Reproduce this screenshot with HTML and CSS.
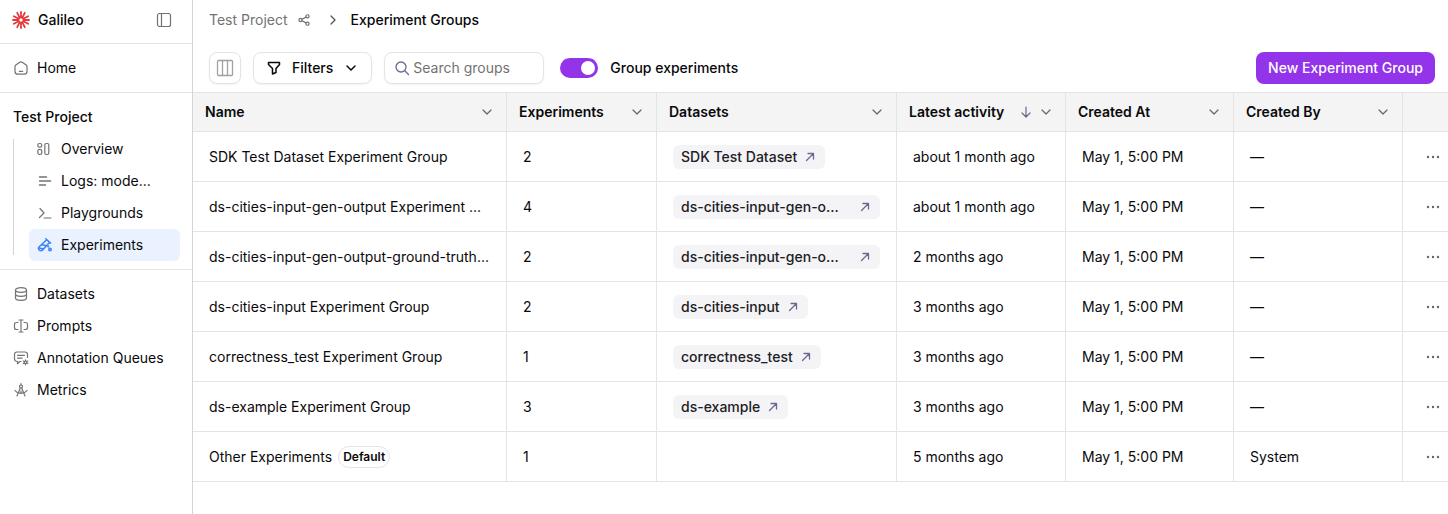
FILE: index.html
```html
<!DOCTYPE html>
<html lang="en">
<head>
  <meta charset="UTF-8">
  <title>Experiment Groups</title>
  <link rel="stylesheet" href="styles.css">
</head>
<body>
  <!-- Shared icons -->
  <svg class="sprite" aria-hidden="true">
    <symbol id="chevron" viewBox="0 0 16 16"><path d="M4 6l4 4 4-4"/></symbol>
    <symbol id="arrow-out" viewBox="0 0 16 16"><path d="M4.500 11.500L11 5M6 4.500h5.500v5.500"/></symbol>
    <symbol id="dots" viewBox="0 0 16 16"><circle cx="3" cy="8" r="1.200"/><circle cx="8" cy="8" r="1.200"/><circle cx="13" cy="8" r="1.200"/></symbol>
  </svg>

  <div class="app">
    <aside class="sidebar">
      <div class="brand">
        <svg class="logo" viewBox="0 0 18 18">
          <path d="M9 6.500V1M9 11.500V17M6.500 9H1M11.500 9H17M7.800 6.800L5.200 1.800M10.200 6.800l2.600-5M7.800 11.200l-2.600 5M10.200 11.200l2.600 5M6.800 7.800L1.800 5.200M11.200 7.800l5-2.600M6.800 10.200l-5 2.600M11.200 10.200l5 2.600"/>
        </svg>
        <span class="brand-name">Galileo</span>
        <button class="collapse" aria-label="Collapse sidebar">
          <svg class="icon" viewBox="0 0 16 16"><rect x="1.500" y="1.500" width="13" height="13" rx="2"/><path d="M5.500 1.500v13"/></svg>
        </button>
      </div>

      <nav class="nav-section">
        <a class="nav-link" href="#">
          <svg class="icon" viewBox="0 0 16 16"><path d="M2.800 5L6.400 2.400q1.600-1 3.200 0L13.200 5q.8.700.8 1.800v4.700q0 2.700-2.700 2.700H4.700Q2 14.200 2 11.500V6.800Q2 5.700 2.800 5zM6.300 11.300h3.400"/></svg>
          Home
        </a>
      </nav>

      <nav class="nav-section">
        <div class="nav-title">Test Project</div>
        <div class="nav-tree">
          <a class="nav-link" href="#">
            <svg class="icon" viewBox="0 0 16 16"><rect x="0.800" y="2.500" width="4" height="3.600" rx="1.700"/><rect x="0.800" y="8.300" width="4" height="5.200" rx="1.900"/><rect x="7.800" y="2.500" width="4" height="11" rx="1.500"/></svg>
            Overview
          </a>
          <a class="nav-link" href="#">
            <svg class="icon icon-thick" viewBox="0 0 16 16"><path d="M2.500 4h7M2.500 8h11M2.500 12h6"/></svg>
            Logs: mode...
          </a>
          <a class="nav-link" href="#">
            <svg class="icon" viewBox="0 0 16 16"><path d="M3 3.500L7 8l-4.500 4.500M7 13h7"/></svg>
            Playgrounds
          </a>
          <a class="nav-link active" href="#">
            <svg class="icon icon-thick" viewBox="0 0 16 16"><path d="M8.800 1.800l4.700 4.300M9.700 2.800L2.200 9.800q-1.500 1.700 0 3.200t3.200.2L12.500 5.500M5 7.800l4.300 1M2.500 11l3 .8"/><circle cx="13" cy="12.500" r="1.200"/><circle cx="11.300" cy="9.500" r=".4"/></svg>
            Experiments
          </a>
        </div>
      </nav>

      <nav class="nav-section last">
        <a class="nav-link" href="#">
          <svg class="icon" viewBox="0 0 16 16"><ellipse cx="8" cy="4" rx="5.500" ry="2.300"/><path d="M2.500 4v8q0 2.300 5.500 2.300t5.500-2.300V4M2.500 8q0 2.300 5.500 2.300T13.500 8"/></svg>
          Datasets
        </a>
        <a class="nav-link" href="#">
          <svg class="icon" viewBox="0 0 16 16"><path d="M8 2.500v11M6 2h4M6 14h4M5 4.500H3.500q-2 0-2 2v3q0 2 2 2H5M11 4.500h1.500q2 0 2 2v3q0 2-2 2H11"/></svg>
          Prompts
        </a>
        <a class="nav-link" href="#">
          <svg class="icon" viewBox="0 0 16 16"><path d="M8 11.500H6.800L4.500 13.800v-2.300q-3 0-3-2.500V4.500q0-2.500 2.500-2.500h8q2.500 0 2.500 2.500V7.500M4.500 5.300h7M4.500 8.200h4.500"/><circle cx="12.500" cy="12.300" r="1.300"/><path d="M12.500 9.800V11M12.500 13.600v1.200M10.300 11l1 .6M13.700 13l1 .6M14.700 11l-1 .6M11.300 13l-1 .6"/></svg>
          Annotation Queues
        </a>
        <a class="nav-link" href="#">
          <svg class="icon" viewBox="0 0 16 16"><circle cx="8" cy="4.500" r="1.500"/><path d="M8 1.500V3M7.300 6L4 14M8.700 6L12 14M2 8.500Q4 11.300 8 11.300t6-2.800M8 9v2.300"/></svg>
          Metrics
        </a>
      </nav>
    </aside>

    <main class="main">
      <div class="breadcrumb">
        <a class="crumb" href="#">Test Project</a>
        <svg class="icon share" viewBox="0 0 16 16"><circle cx="4" cy="8" r="1.800"/><circle cx="12" cy="3.800" r="1.800"/><circle cx="12" cy="12.200" r="1.800"/><path d="M5.700 7.200l4.700-2.500M5.700 8.800l4.700 2.500"/></svg>
        <svg class="icon crumb-sep" viewBox="0 0 16 16"><path d="M6 4l4 4-4 4"/></svg>
        <span class="crumb-current">Experiment Groups</span>
      </div>

      <div class="toolbar">
        <button class="btn btn-icon" aria-label="Columns">
          <svg viewBox="0 0 18 18"><rect x="1.500" y="1.500" width="15" height="15" rx="1"/><path d="M6.500 1.500v15M11.500 1.500v15"/></svg>
        </button>
        <button class="btn btn-filters">
          <svg class="icon" viewBox="0 0 16 16"><path d="M2.500 2.500h11V4.500L10 8.500v4L6.500 14V8.500L2.500 4.500z"/></svg>
          Filters
          <svg class="icon"><use href="#chevron"/></svg>
        </button>
        <label class="search">
          <svg class="icon" viewBox="0 0 16 16"><circle cx="7" cy="7" r="5"/><path d="M10.800 10.800L14.500 14.500"/></svg>
          <input type="text" placeholder="Search groups" aria-label="Search groups">
        </label>
        <label class="toggle">
          <input type="checkbox" checked>
          Group experiments
        </label>
        <button class="btn-primary">New Experiment Group</button>
      </div>

      <table class="groups">
        <colgroup>
          <col>
          <col class="col-count">
          <col class="col-datasets">
          <col class="col-date">
          <col class="col-created">
          <col class="col-date">
          <col class="col-menu">
        </colgroup>
        <thead>
          <tr>
            <th><div class="head">Name <svg class="icon"><use href="#chevron"/></svg></div></th>
            <th><div class="head">Experiments <svg class="icon"><use href="#chevron"/></svg></div></th>
            <th><div class="head">Datasets <svg class="icon"><use href="#chevron"/></svg></div></th>
            <th><div class="head">Latest activity <svg class="icon sort" viewBox="0 0 16 16"><path d="M8 3v10M4 9l4 4 4-4"/></svg><svg class="icon"><use href="#chevron"/></svg></div></th>
            <th><div class="head">Created At <svg class="icon"><use href="#chevron"/></svg></div></th>
            <th><div class="head">Created By <svg class="icon"><use href="#chevron"/></svg></div></th>
            <th></th>
          </tr>
        </thead>
        <tbody>
          <tr>
            <td>SDK Test Dataset Experiment Group</td>
            <td>2</td>
            <td><a class="chip" href="#"><span>SDK Test Dataset</span><svg class="icon"><use href="#arrow-out"/></svg></a></td>
            <td>about 1 month ago</td>
            <td>May 1, 5:00 PM</td>
            <td>—</td>
            <td><button class="row-menu" aria-label="Row actions"><svg><use href="#dots"/></svg></button></td>
          </tr>
          <tr>
            <td>ds-cities-input-gen-output Experiment ...</td>
            <td>4</td>
            <td><a class="chip chip-full" href="#"><span>ds-cities-input-gen-o...</span><svg class="icon"><use href="#arrow-out"/></svg></a></td>
            <td>about 1 month ago</td>
            <td>May 1, 5:00 PM</td>
            <td>—</td>
            <td><button class="row-menu" aria-label="Row actions"><svg><use href="#dots"/></svg></button></td>
          </tr>
          <tr>
            <td>ds-cities-input-gen-output-ground-truth...</td>
            <td>2</td>
            <td><a class="chip chip-full" href="#"><span>ds-cities-input-gen-o...</span><svg class="icon"><use href="#arrow-out"/></svg></a></td>
            <td>2 months ago</td>
            <td>May 1, 5:00 PM</td>
            <td>—</td>
            <td><button class="row-menu" aria-label="Row actions"><svg><use href="#dots"/></svg></button></td>
          </tr>
          <tr>
            <td>ds-cities-input Experiment Group</td>
            <td>2</td>
            <td><a class="chip" href="#"><span>ds-cities-input</span><svg class="icon"><use href="#arrow-out"/></svg></a></td>
            <td>3 months ago</td>
            <td>May 1, 5:00 PM</td>
            <td>—</td>
            <td><button class="row-menu" aria-label="Row actions"><svg><use href="#dots"/></svg></button></td>
          </tr>
          <tr>
            <td>correctness_test Experiment Group</td>
            <td>1</td>
            <td><a class="chip" href="#"><span>correctness_test</span><svg class="icon"><use href="#arrow-out"/></svg></a></td>
            <td>3 months ago</td>
            <td>May 1, 5:00 PM</td>
            <td>—</td>
            <td><button class="row-menu" aria-label="Row actions"><svg><use href="#dots"/></svg></button></td>
          </tr>
          <tr>
            <td>ds-example Experiment Group</td>
            <td>3</td>
            <td><a class="chip" href="#"><span>ds-example</span><svg class="icon"><use href="#arrow-out"/></svg></a></td>
            <td>3 months ago</td>
            <td>May 1, 5:00 PM</td>
            <td>—</td>
            <td><button class="row-menu" aria-label="Row actions"><svg><use href="#dots"/></svg></button></td>
          </tr>
          <tr>
            <td><div class="name-cell">Other Experiments <span class="badge">Default</span></div></td>
            <td>1</td>
            <td></td>
            <td>5 months ago</td>
            <td>May 1, 5:00 PM</td>
            <td>System</td>
            <td><button class="row-menu" aria-label="Row actions"><svg><use href="#dots"/></svg></button></td>
          </tr>
        </tbody>
      </table>
    </main>
  </div>
</body>
</html>
```
FILE: styles.css
```css
* {
  box-sizing: border-box;
}
body {
  margin: 0;
  font-family: Inter, sans-serif;
  font-size: 14px;
  line-height: 20px;
  color: #09090b;
  background: #fff;
}
a {
  color: inherit;
  text-decoration: none;
}
button, input {
  font: inherit;
  color: inherit;
}
button {
  cursor: pointer;
}
svg {
  fill: none;
  stroke: currentColor;
  stroke-linecap: round;
  stroke-linejoin: round;
  flex-shrink: 0;
}
.sprite {
  display: none;
}
.icon {
  width: 16px;
  height: 16px;
  stroke-width: 1.2;
}
.icon-thick {
  stroke-width: 1.5;
}
.app {
  display: flex;
  min-height: 100vh;
}

/* Sidebar */
.sidebar {
  width: 193px;
  flex-shrink: 0;
  border-right: 1px solid #d4d4d8;
}
.brand {
  display: flex;
  align-items: center;
  height: 44px;
  padding: 0 20px 4px 12px;
  border-bottom: 1px solid #e4e4e7;
}
.logo {
  width: 18px;
  height: 18px;
  color: #e5383b;
  stroke-width: 1.8;
}
.brand-name {
  margin-left: 8px;
  font-weight: 500;
}
.collapse {
  display: flex;
  margin-left: auto;
  padding: 0;
  border: none;
  background: none;
  color: #71717a;
}
.nav-section {
  padding: 8px 12px;
  border-bottom: 1px solid #e4e4e7;
}
.nav-section.last {
  border-bottom: none;
}
.nav-title {
  padding: 6px 1px;
  font-weight: 500;
}
.nav-link {
  display: flex;
  align-items: center;
  gap: 8px;
  height: 32px;
  padding-left: 1px;
  white-space: nowrap;
}
.nav-link .icon {
  color: #737373;
}
.nav-tree {
  position: relative;
  padding-left: 17px;
}
.nav-tree::before {
  content: "";
  position: absolute;
  left: 1px;
  top: 6px;
  bottom: 6px;
  width: 1px;
  background: #d4d4d4;
}
.nav-tree .nav-link {
  padding-left: 8px;
  border-radius: 6px;
}
.nav-link.active {
  background: #eaf2ff;
}
.nav-link.active .icon {
  color: #3b82f6;
}

/* Header */
.main {
  flex: 1;
  min-width: 0;
}
.breadcrumb {
  display: flex;
  align-items: center;
  height: 40px;
  padding: 0 16px;
}
.crumb, .share {
  color: #737373;
}
.share {
  width: 14px;
  height: 14px;
  margin-left: 9px;
  stroke-width: 1.4;
}
.crumb-sep {
  margin: 0 10px 0 14px;
  color: #52525b;
  stroke-width: 1.3;
}
.crumb-current {
  font-weight: 500;
}
.toolbar {
  display: flex;
  align-items: center;
  gap: 12px;
  padding: 12px 13px 8px 16px;
}
.btn, .search {
  display: flex;
  align-items: center;
  height: 32px;
  border: 1px solid #e4e4e7;
  border-radius: 8px;
  background: #fff;
  box-shadow: 0 1px 2px rgba(0, 0, 0, 0.05);
}
.btn-icon {
  width: 32px;
  padding: 0 6px;
  color: #a1a1a1;
}
.btn-icon svg {
  width: 18px;
  height: 18px;
  stroke-width: 1.3;
}
.btn-filters {
  gap: 10px;
  padding: 0 12px;
  font-weight: 500;
}
.btn-filters .icon {
  stroke-width: 1.5;
}
.search {
  width: 160px;
  gap: 3px;
  padding: 0 9px;
}
.search .icon {
  color: #6b6890;
  stroke-width: 1.3;
}
.search input {
  flex: 1;
  min-width: 0;
  padding: 0;
  border: none;
  outline: none;
  background: none;
}
.search input::placeholder {
  color: #737373;
}
.toggle {
  display: flex;
  align-items: center;
  gap: 12px;
  margin-left: 4px;
  font-weight: 500;
  cursor: pointer;
}
.toggle input {
  appearance: none;
  display: flex;
  width: 38px;
  height: 20px;
  margin: 0;
  padding: 3px;
  border-radius: 10px;
  background: #d4d4d8;
}
.toggle input::after {
  content: "";
  width: 14px;
  height: 14px;
  border-radius: 50%;
  background: #fff;
}
.toggle input:checked {
  justify-content: flex-end;
  background: #9333ea;
}
.btn-primary {
  height: 32px;
  margin-left: auto;
  padding: 0 12px;
  border: none;
  border-radius: 8px;
  background: #9333ea;
  color: #fff;
  font-weight: 500;
}

/* Table */
.groups {
  width: 100%;
  table-layout: fixed;
  border-collapse: separate;
  border-spacing: 0;
  border-top: 1px solid #e4e4e7;
}
.col-count {
  width: 150px;
}
.col-datasets {
  width: 240px;
}
.col-date {
  width: 169px;
}
.col-created {
  width: 168px;
}
.col-menu {
  width: 45px;
}
th, td {
  border-right: 1px solid #e4e4e7;
  border-bottom: 1px solid #e4e4e7;
  text-align: left;
  white-space: nowrap;
}
th:last-child, td:last-child {
  border-right: none;
}
th {
  height: 39px;
  padding: 0 11px 0 12px;
  background: #f4f4f5;
  font-weight: 600;
}
td {
  height: 50px;
  padding: 0 16px;
}
td:last-child {
  padding: 0 7px;
}
.head {
  display: flex;
  align-items: center;
  gap: 4px;
}
.head .icon {
  color: #666;
}
.head .icon:first-child,
.head .sort {
  margin-left: auto;
}
.head .sort {
  color: #6b6890;
}
.chip {
  display: inline-flex;
  align-items: center;
  gap: 5px;
  max-width: 100%;
  height: 24px;
  padding: 0 7px 0 8px;
  border-radius: 6px;
  background: #f4f4f6;
  color: #202024;
  font-weight: 500;
  vertical-align: middle;
}
.chip-full {
  display: flex;
  justify-content: space-between;
}
.chip .icon {
  color: #6b6890;
  stroke-width: 1.3;
}
.name-cell {
  display: flex;
  align-items: center;
  gap: 6px;
}
.badge {
  padding: 0 4px;
  border: 1px solid #e4e4e7;
  border-radius: 11px;
  font-size: 12px;
  font-weight: 600;
}
.row-menu {
  display: flex;
  margin-left: auto;
  padding: 0;
  border: none;
  background: none;
  color: #666;
}
.row-menu svg {
  width: 16px;
  height: 16px;
  fill: currentColor;
  stroke: none;
}
```
